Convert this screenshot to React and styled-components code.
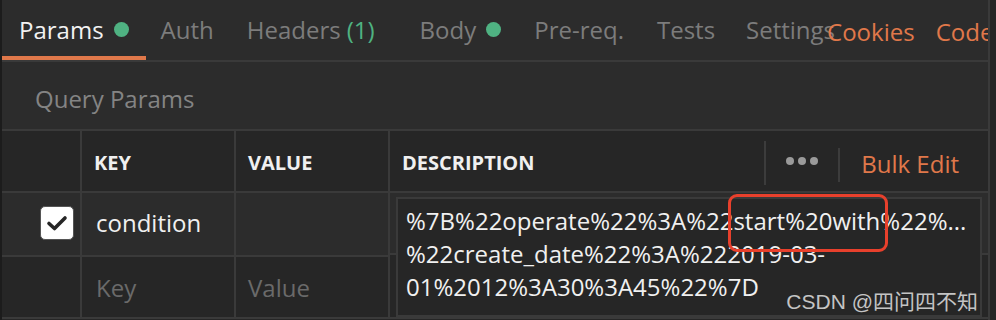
import React from "react";
import styled, { createGlobalStyle } from "styled-components";

const Global = createGlobalStyle`
  html, body { margin: 0; padding: 0; background: #262626; }
  body { font-family: "Open Sans", "Noto Sans", sans-serif; }
`;

const Frame = styled.div`
  width: 996px;
  height: 320px;
  overflow: hidden;
  box-sizing: border-box;
  background: #262626;
  border-left: 2px solid #1c1c1c;
  position: relative;
`;

const Inner = styled.div`
  width: 988px;
  height: 320px;
  border-right: 2px solid #3a3a3a;
  box-sizing: border-box;
`;

const TabBar = styled.div`
  display: flex;
  align-items: stretch;
  height: 62px;
  background: #2c2c2c;
  border-bottom: 2px solid #3a3a3a;
  box-sizing: border-box;
  white-space: nowrap;
  overflow: hidden;
`;

const Tab = styled.div`
  display: flex;
  align-items: center;
  gap: ${(p) => p.$gap ?? 10}px;
  padding: 0 ${(p) => p.$pr ?? 0}px 0 ${(p) => p.$pl ?? 0}px;
  font-size: 24px;
  color: ${(p) => (p.$active ? "#f2f2f2" : "#7c7c7c")};
  border-bottom: 5px solid ${(p) => (p.$active ? "#e0784a" : "transparent")};
  margin-bottom: -1px;
  padding-top: 2px;
`;

const Dot = styled.span`
  width: 15px;
  height: 15px;
  border-radius: 50%;
  background: #4fb282;
`;

const Count = styled.span`
  color: #4fb282;
`;

const OrangeLink = styled.div`
  display: flex;
  align-items: center;
  font-size: 24px;
  color: #e0784a;
  margin-left: ${(p) => p.$ml ?? 0}px;
  padding-top: 2px;
`;

const Section = styled.div`
  height: 67px;
  display: flex;
  align-items: center;
  padding-left: 33px;
  font-size: 24px;
  color: #848484;
  background: #2c2c2c;
  box-sizing: border-box;
  padding-top: 6px;
`;

const Table = styled.div`
  display: grid;
  grid-template-columns: 80px 154px 154px 1fr;
  border-top: 2px solid #3a3a3a;
`;

const Cell = styled.div`
  box-sizing: border-box;
  height: ${(p) => p.$h}px;
  border-right: ${(p) => (p.$last ? "none" : "2px solid #3a3a3a")};
  border-bottom: 2px solid #3a3a3a;
  background: ${(p) => p.$bg || "#262626"};
  display: flex;
  align-items: center;
  padding-left: ${(p) => p.$pl ?? 12}px;
  justify-content: ${(p) => p.$justify || "flex-start"};
`;

const HeadText = styled.span`
  font-weight: 700;
  font-size: 20px;
  color: #f0f0f0;
  padding-top: 2px;
`;

const HeadTools = styled.div`
  margin-left: auto;
  display: flex;
  align-items: center;
  height: 100%;
`;

const Sep = styled.div`
  width: 2px;
  height: ${(p) => p.$h}px;
  background: #3c3c3c;
  margin-top: ${(p) => p.$mt ?? 0}px;
`;

const More = styled.div`
  display: flex;
  gap: 4px;
  padding: 0 20px;
  span {
    width: 8px;
    height: 8px;
    border-radius: 50%;
    background: #9a9a9a;
  }
`;

const Bulk = styled.div`
  font-size: 24px;
  color: #e0784a;
  padding: 4px 29px 0 21px;
`;

const CellText = styled.span`
  font-size: 24px;
  color: ${(p) => (p.$ph ? "#6a6a6a" : "#f0f0f0")};
`;

const Check = styled.div`
  width: 34px;
  height: 34px;
  border-radius: 5px;
  background: #ffffff;
  border: 1px solid #555;
  box-sizing: border-box;
  display: flex;
  align-items: center;
  justify-content: center;
  margin-right: 6px;
  margin-top: -2px;
`;

const DescCell = styled.div`
  grid-row: span 2;
  position: relative;
  border-bottom: 2px solid #3a3a3a;
  display: grid;
  grid-template-rows: 62px 62px;
`;

const DescRow = styled.div`
  background: ${(p) => p.$bg};
  border-bottom: ${(p) => (p.$first ? "2px solid #3a3a3a" : "none")};
`;

const Editor = styled.div`
  position: absolute;
  left: 6px;
  top: 4px;
  right: 6px;
  bottom: 0;
  border: 2px solid #3a3a3a;
  background: #262626;
  padding: 5px 0 0 8px;
  font-size: 24px;
  line-height: 33px;
  color: #f0f0f0;
  white-space: pre;
  box-sizing: border-box;
`;

const Mark = styled.div`
  position: absolute;
  left: 330px;
  top: -5px;
  width: 160px;
  height: 58px;
  border: 3px solid #e8402c;
  border-radius: 9px;
  box-sizing: border-box;
`;

const Watermark = styled.div`
  position: absolute;
  right: 10px;
  bottom: 2px;
  font-family: "Liberation Sans", "Noto Sans CJK SC", sans-serif;
  font-size: 21px;
  color: #c4c4c4;
`;

export default function App() {
  return (
    <>
      <Global />
      <Frame>
        <Inner>
          <TabBar>
            <Tab $active $pl={17} $pr={17}>
              Params <Dot />
            </Tab>
            <Tab $pl={15}>Auth</Tab>
            <Tab $pl={33} $gap={6}>
              Headers <Count>(1)</Count>
            </Tab>
            <Tab $pl={45}>
              Body <Dot />
            </Tab>
            <Tab $pl={33}>Pre-req.</Tab>
            <Tab $pl={33}>Tests</Tab>
            <Tab $pl={31}>Settings</Tab>
            <OrangeLink $ml={-8}>Cookies</OrangeLink>
            <OrangeLink $ml={21}>Code</OrangeLink>
          </TabBar>
          <Section>Query Params</Section>
          <Table>
            <Cell $h={62} />
            <Cell $h={62}>
              <HeadText>KEY</HeadText>
            </Cell>
            <Cell $h={62}>
              <HeadText>VALUE</HeadText>
            </Cell>
            <Cell $h={62} $last>
              <HeadText>DESCRIPTION</HeadText>
              <HeadTools>
                <Sep $h={44} $mt={4} />
                <More>
                  <span />
                  <span />
                  <span />
                </More>
                <Sep $h={34} $mt={8} />
                <Bulk>Bulk Edit</Bulk>
              </HeadTools>
            </Cell>

            <Cell $h={64} $bg="#2c2c2c" $justify="flex-end" $pl={0}>
              <Check>
                <svg width="22" height="18" viewBox="0 0 22 18">
                  <path d="M3 9.5 L8.5 14.5 L19 4" fill="none" stroke="#262626" strokeWidth="3.6" strokeLinecap="round" strokeLinejoin="round" />
                </svg>
              </Check>
            </Cell>
            <Cell $h={64} $bg="#2c2c2c" $pl={14}>
              <CellText style={{ marginTop: -3 }}>condition</CellText>
            </Cell>
            <Cell $h={64} $bg="#2c2c2c" />
            <DescCell>
              <DescRow $first $bg="#2c2c2c" />
              <DescRow $bg="#262626" />
              <Editor>
                {"%7B%22operate%22%3A%22start%20with%22%...\n%22create_date%22%3A%222019-03-\n01%2012%3A30%3A45%22%7D"}
                <Mark />
              </Editor>
              <Watermark>CSDN @四问四不知</Watermark>
            </DescCell>

            <Cell $h={62} />
            <Cell $h={62} $pl={14}>
              <CellText $ph>Key</CellText>
            </Cell>
            <Cell $h={62}>
              <CellText $ph>Value</CellText>
            </Cell>
          </Table>
        </Inner>
      </Frame>
    </>
  );
}
